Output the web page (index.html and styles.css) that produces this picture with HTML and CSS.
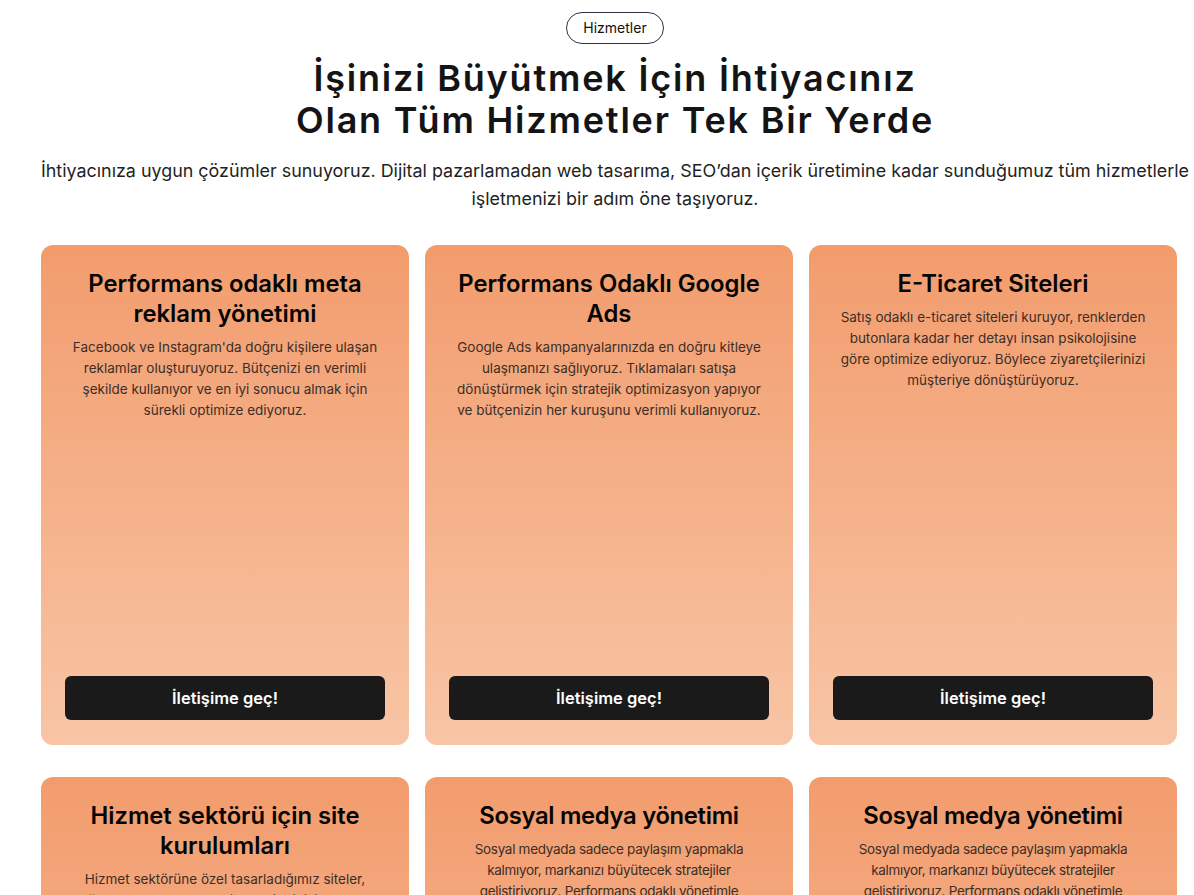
FILE: index.html
```html
<!DOCTYPE html>
<html lang="tr">
<head>
  <meta charset="UTF-8">
  <meta name="viewport" content="width=device-width, initial-scale=1.0">
  <title>Hizmetler</title>
  <link rel="stylesheet" href="styles.css">
</head>
<body>
  <section class="services">
    <header class="services-head">
      <span class="pill">Hizmetler</span>
      <h1>İşinizi Büyütmek İçin İhtiyacınız<br>Olan Tüm Hizmetler Tek Bir Yerde</h1>
      <p class="lead">İhtiyacınıza uygun çözümler sunuyoruz. Dijital pazarlamadan web tasarıma, SEO’dan içerik üretimine kadar sunduğumuz tüm hizmetlerle işletmenizi bir adım öne taşıyoruz.</p>
    </header>

    <div class="cards">
      <div class="card">
        <h2>Performans odaklı meta reklam yönetimi</h2>
        <p>Facebook ve Instagram'da doğru kişilere ulaşan reklamlar oluşturuyoruz. Bütçenizi en verimli şekilde kullanıyor ve en iyi sonucu almak için sürekli optimize ediyoruz.</p>
        <button type="button">İletişime geç!</button>
      </div>
      <div class="card">
        <h2>Performans Odaklı Google Ads</h2>
        <p>Google Ads kampanyalarınızda en doğru kitleye ulaşmanızı sağlıyoruz. Tıklamaları satışa dönüştürmek için stratejik optimizasyon yapıyor ve bütçenizin her kuruşunu verimli kullanıyoruz.</p>
        <button type="button">İletişime geç!</button>
      </div>
      <div class="card">
        <h2>E-Ticaret Siteleri</h2>
        <p>Satış odaklı e-ticaret siteleri kuruyor, renklerden butonlara kadar her detayı insan psikolojisine göre optimize ediyoruz. Böylece ziyaretçilerinizi müşteriye dönüştürüyoruz.</p>
        <button type="button">İletişime geç!</button>
      </div>
      <div class="card">
        <h2>Hizmet sektörü için site kurulumları</h2>
        <p>Hizmet sektörüne özel tasarladığımız siteler, güven veren yapısıyla ziyaretçilerinizi kolayca randevu ve teklif taleplerine yönlendirir.</p>
        <button type="button">İletişime geç!</button>
      </div>
      <div class="card">
        <h2 class="narrow">Sosyal medya yönetimi</h2>
        <p class="narrow">Sosyal medyada sadece paylaşım yapmakla kalmıyor, markanızı büyütecek stratejiler geliştiriyoruz. Performans odaklı yönetimle etkileşiminizi artırıyoruz.</p>
        <button type="button">İletişime geç!</button>
      </div>
      <div class="card">
        <h2 class="narrow">Sosyal medya yönetimi</h2>
        <p class="narrow">Sosyal medyada sadece paylaşım yapmakla kalmıyor, markanızı büyütecek stratejiler geliştiriyoruz. Performans odaklı yönetimle etkileşiminizi artırıyoruz.</p>
        <button type="button">İletişime geç!</button>
      </div>
    </div>
  </section>
</body>
</html>
```

FILE: styles.css
```css
/* Services section */
* {
  box-sizing: border-box;
}

body {
  margin: 0;
  font-family: Inter, "Noto Sans", sans-serif;
  color: #1b1b1b;
  background: #fff;
  overflow-x: hidden;
}

.services {
  padding: 12px 0 40px;
}

.services-head {
  display: flex;
  flex-direction: column;
  align-items: center;
  text-align: center;
  padding-left: 36px;
}

.pill {
  display: inline-block;
  height: 32px;
  line-height: 30px;
  padding: 0 16px;
  border: 1px solid #2d3340;
  border-radius: 16px;
  font-size: 14px;
  color: #111;
}

h1 {
  margin: 13px 0 0;
  font-size: 36px;
  line-height: 42px;
  font-weight: 600;
  letter-spacing: 1.8px;
  color: #141414;
}

.lead {
  margin: 16px 0 0;
  font-size: 17.9px;
  line-height: 28px;
  color: #1f1f1f;
}

.cards {
  display: grid;
  grid-template-columns: repeat(3, 368px);
  gap: 32px 16px;
  padding-left: 41px;
  margin-top: 32px;
}

.card {
  display: flex;
  flex-direction: column;
  height: 500px;
  padding: 24px;
  border-radius: 12px;
  background: linear-gradient(180deg, #f29c6d 0%, #f8c5a5 100%);
  text-align: center;
}

.card h2 {
  margin: 0;
  font-size: 23.8px;
  line-height: 30px;
  font-weight: 600;
  color: #050505;
}

.card p {
  margin: 8px 0 0;
  padding: 0 6px;
  font-size: 13.5px;
  line-height: 21px;
  color: #3b2e27;
}

.card .narrow {
  letter-spacing: -0.3px;
}

.card button {
  margin-top: auto;
  margin-bottom: 1px;
  height: 44px;
  border: none;
  border-radius: 6px;
  background: #1a1a1a;
  color: #fff;
  font-family: inherit;
  font-size: 16.5px;
  font-weight: 600;
  cursor: pointer;
}
```
